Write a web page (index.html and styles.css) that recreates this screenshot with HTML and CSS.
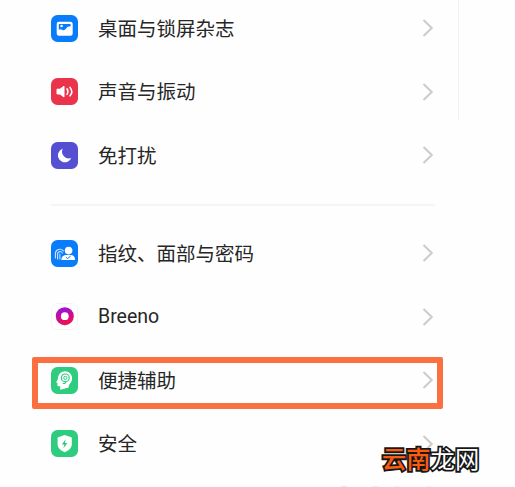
FILE: index.html
```html
<!DOCTYPE html>
<html lang="zh-CN">
<head>
<meta charset="utf-8">
<title>设置</title>
<link rel="stylesheet" href="styles.css">
</head>
<body>
<main class="screen">
  <section class="group">
    <div class="row">
      <svg class="icon" viewBox="0 0 27 27"><rect width="27" height="27" rx="6.5" fill="#087cfa"/><rect x="5.7" y="6.7" width="16" height="14" rx="2.2" fill="#fff"/><path d="M7.8 9h11.8v2.3c-2.5 0-3.3.7-4.5 2.3-1.3 1.8-2.5 2.2-4.1 1.1-1.1-.8-2-.7-3.2.1z" fill="#087cfa"/><circle cx="10.6" cy="11" r="1.3" fill="#fff"/></svg>
      <span class="label">桌面与锁屏杂志</span>
      <svg class="chevron" viewBox="0 0 12 20"><path d="M1.5 2l8.3 8-8.3 8"/></svg>
    </div>
    <div class="row">
      <svg class="icon" viewBox="0 0 27 27"><rect width="27" height="27" rx="6.5" fill="#e9344c"/><path d="M6 11.2h3l4-3v10.8l-4-3H6z" fill="#fff" stroke="#fff" stroke-linejoin="round"/><path d="M16 10.8q1.8 2.8 0 5.6M19 9.4q3.6 4.2 0 8.4" fill="none" stroke="#fff" stroke-width="1.6" stroke-linecap="round"/></svg>
      <span class="label">声音与振动</span>
      <svg class="chevron" viewBox="0 0 12 20"><path d="M1.5 2l8.3 8-8.3 8"/></svg>
    </div>
    <div class="row">
      <svg class="icon" viewBox="0 0 27 27"><rect width="27" height="27" rx="6.5" fill="#5550d2"/><path d="M11.7 6.8a6.9 6.9 0 1 0 8.5 9.2A6.8 6.8 0 0 1 11.7 6.8z" fill="#fff"/></svg>
      <span class="label">免打扰</span>
      <svg class="chevron" viewBox="0 0 12 20"><path d="M1.5 2l8.3 8-8.3 8"/></svg>
    </div>
  </section>
  <hr class="divider">
  <section class="group">
    <div class="row">
      <svg class="icon" viewBox="0 0 27 27"><rect width="27" height="27" rx="6.5" fill="#087cfa"/><path d="M4.4 18v-4.2a4.6 4.6 0 0 1 8-3M6.6 19v-5.1a2.5 2.5 0 0 1 4.8-.8M8.9 19v-5" fill="none" stroke="#cfe7ff" stroke-width="1.1" stroke-linecap="round"/><circle cx="17.6" cy="10.6" r="3.8" fill="#fff"/><path d="M10.4 20c0-3 2.1-4.9 5-4.9h4.4c2.5 0 4.3 1.9 4.3 4.9z" fill="#fff"/><path d="M14.8 17.2l1.8 1.4 3-2.5" fill="none" stroke="#087cfa" stroke-width="1"/></svg>
      <span class="label">指纹、面部与密码</span>
      <svg class="chevron" viewBox="0 0 12 20"><path d="M1.5 2l8.3 8-8.3 8"/></svg>
    </div>
    <div class="row">
      <svg class="icon" viewBox="0 0 27 27"><defs><linearGradient id="ring" x1="0.3" y1="0" x2="0.6" y2="1"><stop offset="0.1" stop-color="#9c12d8"/><stop offset="0.55" stop-color="#d00b8c"/><stop offset="1" stop-color="#f51245"/></linearGradient></defs><rect x=".5" y=".5" width="26" height="26" rx="6" fill="#fff" stroke="#f4f4f4"/><circle cx="13.8" cy="13.2" r="9" fill="url(#ring)"/><circle cx="13.8" cy="13.2" r="3.9" fill="#fff"/></svg>
      <span class="label latin">Breeno</span>
      <svg class="chevron" viewBox="0 0 12 20"><path d="M1.5 2l8.3 8-8.3 8"/></svg>
    </div>
    <div class="row highlighted">
      <svg class="icon" viewBox="0 0 27 27"><rect width="27" height="27" rx="6.5" fill="#2dcc7f"/><path d="M9.2 22.7v-3.4H7.6c-.9 0-1.2-.5-1.2-1.3v-2l-1.3-.6 1.8-3.3C7 7.2 10 4.3 14 4.3c4.1 0 7.1 3 7.1 6.9 0 2.8-1.2 4.5-2.5 6.1-.7 1-.9 1.7-.9 3.1z" fill="#fff"/><circle cx="14.3" cy="10.9" r="3.9" fill="none" stroke="#2dcc7f" stroke-width="1.2"/><circle cx="14.3" cy="10.9" r="1.6" fill="none" stroke="#2dcc7f" stroke-width="1"/><path d="M14.3 14.8v1.7h-2.6" fill="none" stroke="#2dcc7f"/></svg>
      <span class="label">便捷辅助</span>
      <svg class="chevron" viewBox="0 0 12 20"><path d="M1.5 2l8.3 8-8.3 8"/></svg>
    </div>
    <div class="row">
      <svg class="icon" viewBox="0 0 27 27"><rect width="27" height="27" rx="6.5" fill="#2dcc7f"/><path d="M13.7 5l7.1 2.4v6.8c0 3.6-3 6.2-7.1 8.1-4.1-1.9-7.1-4.5-7.1-8.1V7.4z" fill="#fff"/><path d="M14.6 9.3l-3.8 5.1h2.4l-.7 3.9 3.9-5.3H14z" fill="#2dcc7f"/></svg>
      <span class="label">安全</span>
      <svg class="chevron" viewBox="0 0 12 20"><path d="M1.5 2l8.3 8-8.3 8"/></svg>
    </div>
  </section>
  <div class="side-line"></div>
  <div class="watermark"><span class="accent">云南</span>龙网</div>
  <svg class="page-edge" viewBox="0 0 100 3"><path d="M4 3.5q4-3 8 0M36 3h7M59 3h4M91 3h4" fill="none" stroke="#dfe4e5"/></svg>
</main>
</body>
</html>
```
FILE: styles.css
```css
body {
  margin: 0;
  background: #fefefe;
  font-family: "Noto Sans CJK SC", sans-serif;
}

.screen {
  position: relative;
  box-sizing: border-box;
  width: 515px;
  height: 487px;
  overflow: hidden;
}

.group {
  width: 384px;
  margin-left: 51px;
}

.group:first-child {
  margin-top: -3.4px;
}

.row {
  position: relative;
  display: flex;
  align-items: center;
  height: 63.4px;
}

.icon {
  width: 27px;
  height: 27px;
  flex: none;
}

.label {
  flex: 1;
  margin-left: 20px;
  padding-bottom: 1px;
  color: #262626;
  font-size: 19.5px;
  line-height: 28px;
  white-space: nowrap;
}

.latin {
  padding: 1px 0 0;
  font-family: Roboto, sans-serif;
}

.chevron {
  width: 12px;
  height: 20px;
  margin-right: 1px;
  fill: none;
  stroke: #cbcbcb;
  stroke-width: 2;
}

.divider {
  width: 384px;
  height: 2px;
  margin: 17px 0 16px 51px;
  border: 0;
  background: #f5f5f5;
}

.highlighted::after {
  content: "";
  position: absolute;
  top: 8.6px;
  left: -19px;
  box-sizing: border-box;
  width: 411px;
  height: 51.5px;
  border: 6px solid #fb7040;
  border-radius: 2px;
}

.side-line {
  position: absolute;
  top: 0;
  left: 458px;
  width: 1px;
  height: 120px;
  background: #f3f3f3;
}

.watermark {
  position: absolute;
  top: 440px;
  left: 382px;
  color: #fff;
  font-size: 24.3px;
  font-weight: 400;
  line-height: 36px;
  white-space: nowrap;
  -webkit-text-stroke: 3.6px #171717;
  paint-order: stroke fill;
}

.accent {
  color: #fa5b0c;
  font-weight: 500;
}

.page-edge {
  position: absolute;
  top: 484px;
  left: 336px;
  width: 100px;
  height: 3px;
}
```
